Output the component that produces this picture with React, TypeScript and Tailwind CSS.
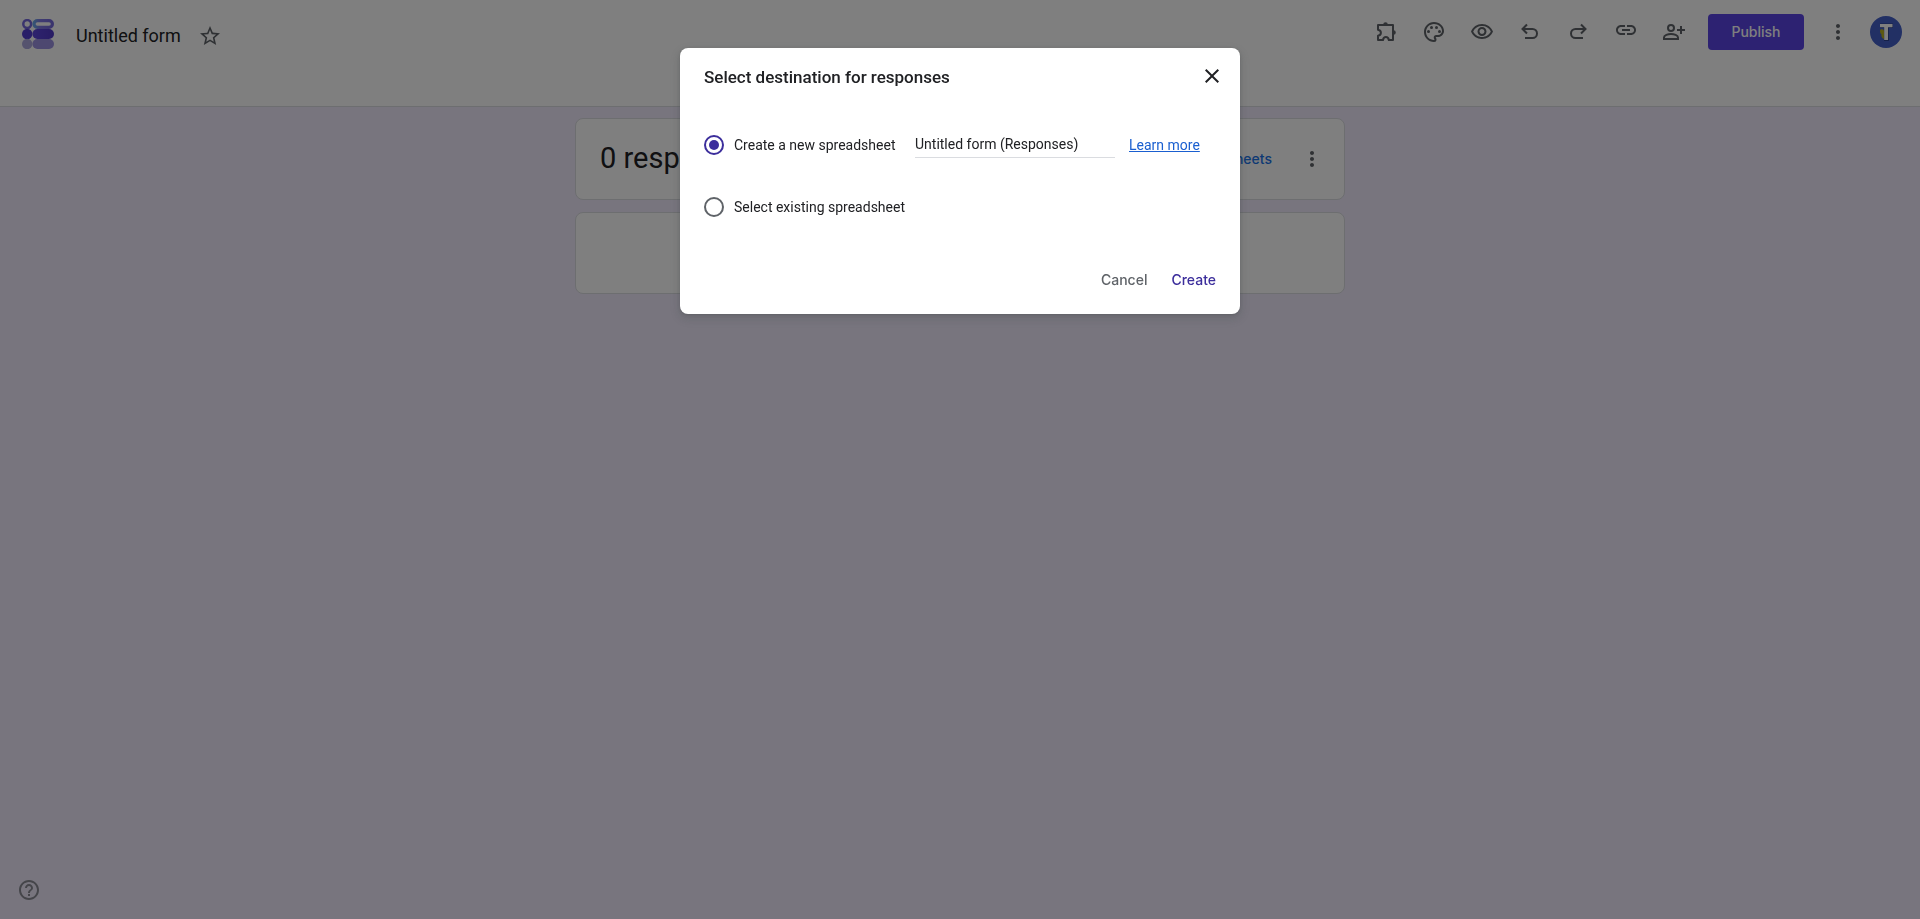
import { useState } from "react";
import type { ReactNode } from "react";
import {
  MdClose,
  MdHelpOutline,
  MdMoreVert,
  MdOutlinePalette,
  MdOutlineVisibility,
  MdLink,
  MdStarBorder,
} from "react-icons/md";

function Logo() {
  return (
    <svg viewBox="0 0 32 30" className="h-[30px] w-8" aria-hidden="true">
      <defs>
        <linearGradient id="bar-top" x1="0" x2="1">
          <stop offset="0" stopColor="#68a8ea" />
          <stop offset="0.35" stopColor="#8078e4" />
          <stop offset="1" stopColor="#7468dc" />
        </linearGradient>
        <linearGradient id="bar-mid" x1="0" x2="1">
          <stop offset="0" stopColor="#5c46dc" />
          <stop offset="1" stopColor="#5038c8" />
        </linearGradient>
      </defs>
      <circle cx="5.2" cy="5" r="3.9" fill="none" stroke="#7468dc" strokeWidth="2.5" />
      <rect x="12" y="1.600" width="18.400" height="6.800" rx="3.400" fill="#fff" stroke="url(#bar-top)" strokeWidth="3.200" />
      <circle cx="5.2" cy="15" r="5.2" fill="#523cd0" />
      <rect x="10.4" y="10" width="21.6" height="10" rx="5" fill="url(#bar-mid)" />
      <circle cx="5.2" cy="25" r="5.2" fill="#aaa6dc" />
      <rect x="10.4" y="20" width="21.6" height="10" rx="5" fill="#9a90e0" />
    </svg>
  );
}

function StrokeIcon({ children }: { children: ReactNode }) {
  return (
    <svg viewBox="0 0 24 24" className="size-6" fill="none" stroke="currentColor" strokeWidth="2" aria-hidden="true">
      {children}
    </svg>
  );
}

function IconButton({ label, children }: { label: string; children: ReactNode }) {
  return (
    <button type="button" aria-label={label} className="flex size-12 items-center justify-center text-[#5f6368]">
      {children}
    </button>
  );
}

function Header() {
  return (
    <header className="flex h-[107px] items-start justify-between border-b border-[#dadce0] bg-white pl-[22px] pr-[18px]">
      <div className="flex items-start pt-[19px]">
        <Logo />
        <div className="ml-[22px] flex items-center gap-[17px] pt-[3px]">
          <h1 className="font-[Roboto,sans-serif] text-lg text-[#202124]">Untitled form</h1>
          <button type="button" aria-label="Star" className="text-[#5f6368]">
            <MdStarBorder className="size-6" />
          </button>
        </div>
      </div>
      <div className="flex items-center pt-2">
        <IconButton label="Add-ons">
          <StrokeIcon>
            <path d="M4 5h15v15h-4.200c-.3-1.900-1.400-2.900-2.900-2.900s-2.600 1-2.900 2.900H4v-4.200c1.900-.3 2.900-1.500 2.900-3s-1-2.700-2.900-3z" strokeLinejoin="round" />
            <path d="M9.200 4.500a2.300 2.300 0 0 1 4.600 0zM19.500 10.200a2.300 2.300 0 0 1 0 4.600z" fill="currentColor" stroke="none" />
          </StrokeIcon>
        </IconButton>
        <IconButton label="Customize theme">
          <MdOutlinePalette className="size-6" />
        </IconButton>
        <IconButton label="Preview">
          <MdOutlineVisibility className="size-6" />
        </IconButton>
        <IconButton label="Undo">
          <StrokeIcon>
            <path d="M7 18h7.500a4.500 4.500 0 0 0 0-9H5M9 4.500 4.500 9 9 13.500" />
          </StrokeIcon>
        </IconButton>
        <IconButton label="Redo">
          <StrokeIcon>
            <path d="M17 18H9.500a4.500 4.500 0 0 1 0-9H19M15 4.500 19.500 9 15 13.500" />
          </StrokeIcon>
        </IconButton>
        <IconButton label="Copy link">
          <MdLink className="mb-1 size-6" />
        </IconButton>
        <IconButton label="Share">
          <StrokeIcon>
            <circle cx="9" cy="8" r="3" />
            <path d="M2 19v-1.500c0-2.300 4-3.500 7-3.500s7 1.200 7 3.500V19zM19 6v8M15 10h8" />
          </StrokeIcon>
        </IconButton>
        <button type="button" className="mx-2.5 h-9 w-24 rounded bg-[#5a44e4] font-[Inter,sans-serif] text-sm font-medium text-white">
          Publish
        </button>
        <IconButton label="More options">
          <MdMoreVert className="size-6" />
        </IconButton>
        <button type="button" aria-label="Account" className="ml-2">
          <svg viewBox="0 0 32 32" className="size-8" aria-hidden="true">
            <circle cx="16" cy="16" r="16" fill="#4460c8" />
            <path d="M10 7.500h13V12h-4v13h-5V12h-4z" fill="#2c4290" />
            <path d="M10 14.500c0-1.600 4-1.600 4 .5v8c-2.200-.8-2.800-2.600-2.600-5-1 0-1.400-2-1.400-3.500z" fill="#b8b020" />
            <path d="M10 8h12.500v3.200H18V24h-3.800V11.200H10z" fill="#fff" />
          </svg>
        </button>
      </div>
    </header>
  );
}

function Responses() {
  return (
    <main className="mx-auto mt-[11px] flex w-full max-w-[770px] flex-col gap-3">
      <section className="flex h-[82px] items-center justify-between rounded-lg border border-[#dadce0] bg-white pl-6 pr-2">
        <h2 className="font-[Roboto,sans-serif] text-[29px] text-[#202124]">0 responses</h2>
        <div className="flex items-center gap-4">
          <button type="button" className="font-[Inter,sans-serif] text-sm font-medium text-[#1a73e8]">
            Link to Sheets
          </button>
          <IconButton label="Response options">
            <MdMoreVert className="size-6" />
          </IconButton>
        </div>
      </section>
      <section className="h-[82px] rounded-lg border border-[#dadce0] bg-white" />
    </main>
  );
}

const radioClass =
  "grid size-5 shrink-0 cursor-pointer appearance-none place-items-center rounded-full border-2 border-[#5f6368] before:size-2.5 before:rounded-full checked:border-[#3c2e9c] checked:before:bg-[#3c2e9c]";

function DestinationDialog({ onClose }: { onClose: () => void }) {
  const [choice, setChoice] = useState("new");
  const [name, setName] = useState("Untitled form (Responses)");

  return (
    <div className="fixed inset-0 flex items-start justify-center bg-black/50 pt-12">
      <div
        role="dialog"
        aria-modal="true"
        aria-labelledby="dialog-title"
        className="w-full max-w-[560px] rounded-lg bg-white px-6 py-4 font-[Roboto,sans-serif] text-sm text-[#202124] shadow-[0_1px_3px_rgba(60,64,67,0.3),0_4px_8px_3px_rgba(60,64,67,0.15)]"
      >
        <div className="flex items-start justify-between">
          <h2 id="dialog-title" className="pt-px text-[17px] leading-6 font-medium">
            Select destination for responses
          </h2>
          <button type="button" aria-label="Close" onClick={onClose} className="-mr-2">
            <MdClose className="size-6" />
          </button>
        </div>
        <div className="mt-9 flex h-10 items-center">
          <input id="new-sheet" type="radio" name="destination" className={radioClass} checked={choice === "new"} onChange={() => setChoice("new")} />
          <label htmlFor="new-sheet" className="ml-2.5 w-[167px]">
            Create a new spreadsheet
          </label>
          <input
            type="text"
            aria-label="Spreadsheet name"
            value={name}
            onChange={(event) => setName(event.target.value)}
            className="ml-3.5 h-[26px] w-[200px] border-b border-[#dadce0] pb-0.5 outline-none"
          />
          <a href="#learn-more" className="ml-3.5 text-[#1a5fd0] underline">
            Learn more
          </a>
        </div>
        <div className="mt-[22px] flex h-10 items-center">
          <input id="existing-sheet" type="radio" name="destination" className={radioClass} checked={choice === "existing"} onChange={() => setChoice("existing")} />
          <label htmlFor="existing-sheet" className="ml-2.5">
            Select existing spreadsheet
          </label>
        </div>
        <div className="mt-[35px] flex h-9 items-center justify-end gap-6 font-[Inter,sans-serif] text-sm font-medium">
          <button type="button" onClick={onClose} className="text-[#5f6368]">
            Cancel
          </button>
          <button type="button" className="text-[#3c2e9c]">
            Create
          </button>
        </div>
      </div>
    </div>
  );
}

export default function App() {
  const [open, setOpen] = useState(true);

  return (
    <div className="flex min-h-screen flex-col bg-[#f0ebfd]">
      <Header />
      <Responses />
      <button type="button" aria-label="Help" className="fixed bottom-[17px] left-[17px] text-[#5f6368] opacity-70">
        <MdHelpOutline className="size-6" />
      </button>
      {open && <DestinationDialog onClose={() => setOpen(false)} />}
    </div>
  );
}
